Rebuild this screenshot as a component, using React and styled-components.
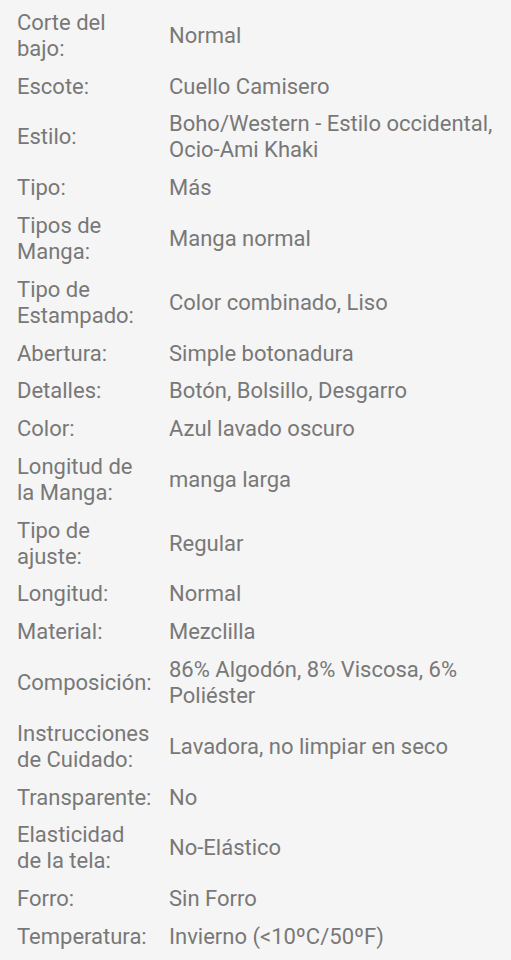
import styled, { createGlobalStyle } from "styled-components";

const GlobalStyle = createGlobalStyle`
	html, body {
		margin: 0;
		padding: 0;
		background: #f5f5f5;
	}
`;

const Sheet = styled.div`
	background: #f5f5f5;
	padding: 4px 0 0 17px;
	font-family: Roboto, "Noto Sans", sans-serif;
	font-size: 22px;
	line-height: 26px;
	color: #787878;
	min-height: 960px;
	box-sizing: border-box;
`;

const Row = styled.div`
	display: grid;
	grid-template-columns: 140px 1fr;
	column-gap: 12px;
	align-items: center;
	padding: 5.9px 0;
`;

const Label = styled.div`
	white-space: pre-line;
`;

const Value = styled.div`
	padding-right: 10px;
`;

const specs = [
	["Corte del\nbajo:", "Normal"],
	["Escote:", "Cuello Camisero"],
	["Estilo:", "Boho/Western - Estilo occidental, Ocio-Ami Khaki"],
	["Tipo:", "Más"],
	["Tipos de\nManga:", "Manga normal"],
	["Tipo de\nEstampado:", "Color combinado, Liso"],
	["Abertura:", "Simple botonadura"],
	["Detalles:", "Botón, Bolsillo, Desgarro"],
	["Color:", "Azul lavado oscuro"],
	["Longitud de\nla Manga:", "manga larga"],
	["Tipo de\najuste:", "Regular"],
	["Longitud:", "Normal"],
	["Material:", "Mezclilla"],
	["Composición:", "86% Algodón, 8% Viscosa, 6% Poliéster"],
	["Instrucciones\nde Cuidado:", "Lavadora, no limpiar en seco"],
	["Transparente:", "No"],
	["Elasticidad\nde la tela:", "No-Elástico"],
	["Forro:", "Sin Forro"],
	["Temperatura:", "Invierno (<10ºC/50ºF)"],
];

function App() {
	return (
		<>
			<GlobalStyle />
			<Sheet>
				{specs.map(([label, value]) => (
					<Row key={label}>
						<Label>{label}</Label>
						<Value>{value}</Value>
					</Row>
				))}
			</Sheet>
		</>
	);
}

export default App;
